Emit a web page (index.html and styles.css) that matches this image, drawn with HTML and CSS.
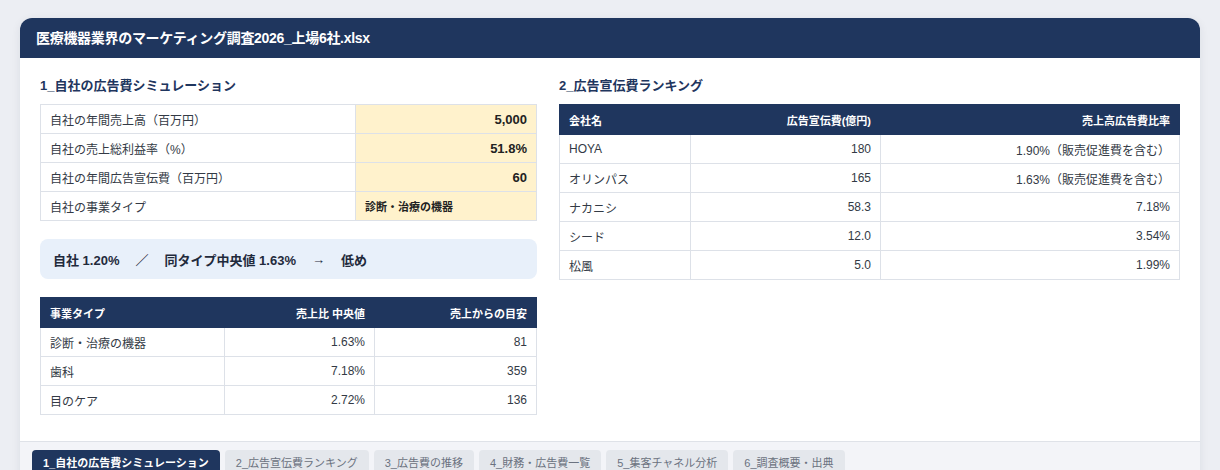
FILE: index.html
```html
<!DOCTYPE html>
<html lang="ja">
<head>
<meta charset="utf-8">
<link rel="stylesheet" href="styles.css">
</head>
<body>
<div class="card">
  <div class="card-head">医療機器業界のマーケティング調査2026_上場6社.xlsx</div>
  <div class="card-body">
    <div class="col left">
      <h2 class="sec">1_自社の広告費シミュレーション</h2>
      <table class="grid input">
        <tr><td class="lbl">自社の年間売上高（百万円）</td><td class="val num">5,000</td></tr>
        <tr><td class="lbl">自社の売上総利益率（%）</td><td class="val num">51.8%</td></tr>
        <tr><td class="lbl">自社の年間広告宣伝費（百万円）</td><td class="val num">60</td></tr>
        <tr><td class="lbl">自社の事業タイプ</td><td class="val txt">診断・治療の機器</td></tr>
      </table>
      <div class="callout"><span>自社 1.20%</span><span>／</span><span>同タイプ中央値 1.63%</span><span>→</span><span>低め</span></div>
      <table class="grid data t2">
        <thead><tr><th class="l">事業タイプ</th><th>売上比 中央値</th><th>売上からの目安</th></tr></thead>
        <tbody>
          <tr><td class="l">診断・治療の機器</td><td>1.63%</td><td>81</td></tr>
          <tr><td class="l">歯科</td><td>7.18%</td><td>359</td></tr>
          <tr><td class="l">目のケア</td><td>2.72%</td><td>136</td></tr>
        </tbody>
      </table>
    </div>
    <div class="col right">
      <h2 class="sec">2_広告宣伝費ランキング</h2>
      <table class="grid data t3">
        <thead><tr><th class="l">会社名</th><th>広告宣伝費(億円)</th><th>売上高広告費比率</th></tr></thead>
        <tbody>
          <tr><td class="l">HOYA</td><td>180</td><td>1.90%（販売促進費を含む）</td></tr>
          <tr><td class="l">オリンパス</td><td>165</td><td>1.63%（販売促進費を含む）</td></tr>
          <tr><td class="l">ナカニシ</td><td>58.3</td><td>7.18%</td></tr>
          <tr><td class="l">シード</td><td>12.0</td><td>3.54%</td></tr>
          <tr><td class="l">松風</td><td>5.0</td><td>1.99%</td></tr>
        </tbody>
      </table>
    </div>
  </div>
  <div class="tabs">
    <span class="tab active">1_自社の広告費シミュレーション</span>
    <span class="tab">2_広告宣伝費ランキング</span>
    <span class="tab">3_広告費の推移</span>
    <span class="tab">4_財務・広告費一覧</span>
    <span class="tab">5_集客チャネル分析</span>
    <span class="tab">6_調査概要・出典</span>
  </div>
</div>
</body>
</html>
```
FILE: styles.css
```css
html, body {
  margin: 0;
  padding: 0;
}
body {
  background: #eceef3;
  font-family: "Liberation Sans", "Noto Sans CJK JP", sans-serif;
  color: #333a45;
  padding: 18px 20px 0 20px;
  height: 470px;
  box-sizing: border-box;
  overflow: hidden;
}
.card {
  background: #fff;
  border-radius: 12px 12px 0 0;
  box-shadow: 0 2px 10px rgba(30, 40, 70, 0.08);
  overflow: hidden;
}
.card-head {
  background: #1f365e;
  color: #fff;
  font-weight: bold;
  font-size: 14px;
  letter-spacing: -0.3px;
  height: 40px;
  line-height: 40px;
  padding: 0 16px;
}
.card-body {
  display: flex;
  gap: 22px;
  padding: 18px 20px 26px 20px;
  height: 339px;
}
.col.left { width: 497px; }
.col.right { flex: 1; }
.sec {
  margin: 0 0 9px 0;
  font-size: 13px;
  font-weight: bold;
  color: #1f365e;
  line-height: 19px;
}
table.grid {
  width: 100%;
  border-collapse: collapse;
  font-size: 12px;
}
table.grid td {
  border: 1px solid #dde1e8;
  height: 29px;
  padding: 0 9px;
  box-sizing: border-box;
}
table.input td.lbl { width: 315px; }
table.input td.val {
  background: #fff2cc;
  font-weight: bold;
  color: #222;
}
table.input td.num { text-align: right; font-size: 13px; }
table.input td.txt { font-size: 11px; }
.callout {
  margin-top: 18px;
  background: #e8f0fa;
  border-radius: 8px;
  height: 40px;
  padding: 0 13px;
  font-size: 13px;
  font-weight: bold;
  color: #1f2a3c;
  display: flex;
  align-items: center;
  gap: 16px;
}
table.data { margin-top: 18px; }
table.data th {
  background: #1f365e;
  color: #fff;
  font-weight: bold;
  font-size: 11px;
  height: 30px;
  box-sizing: border-box;
  padding: 0 9px;
  text-align: right;
  border: 1px solid #1f365e;
}
table.data td { text-align: right; }
table.data th.l, table.data td.l { text-align: left; }
.t2 th:nth-child(1) { width: 184px; }
.t2 th:nth-child(2) { width: 150px; }
.col.right table.data { margin-top: 0; }
.t3 th:nth-child(1) { width: 131px; }
.t3 th:nth-child(2) { width: 190px; }
.tabs {
  background: #f3f4f8;
  border-top: 1px solid #dfe2e8;
  padding: 8px 12px 0 12px;
  display: flex;
  gap: 5px;
  height: 40px;
}
.tab {
  background: #e4e7ec;
  color: #6b7280;
  font-size: 11px;
  height: 24px;
  line-height: 26px;
  padding: 0 11px;
  border-radius: 4px 4px 0 0;
}
.tab.active {
  background: #1f365e;
  color: #fff;
  font-weight: bold;
}
```
